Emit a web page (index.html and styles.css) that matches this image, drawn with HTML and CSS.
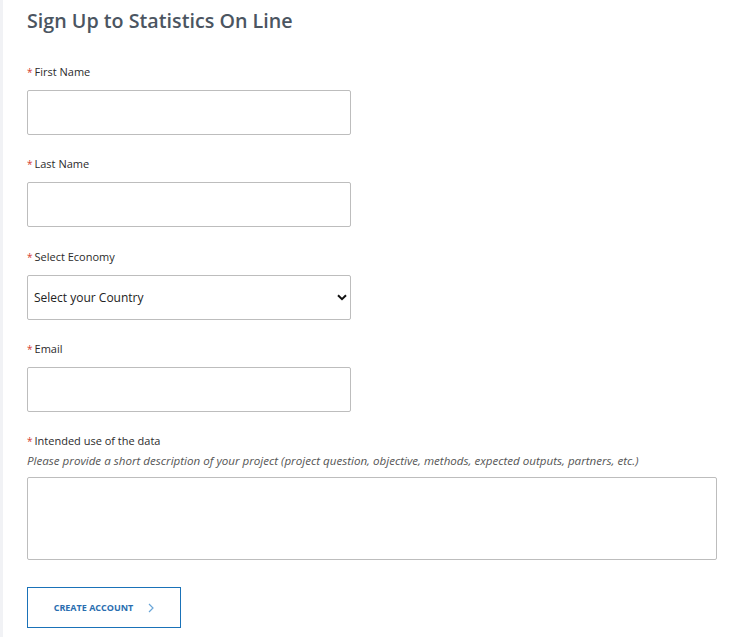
FILE: index.html
```html
<!DOCTYPE html>
<html lang="en">
<head>
<meta charset="utf-8">
<title>Sign Up to Statistics On Line</title>
<link rel="stylesheet" href="styles.css">
</head>
<body>
<div class="page">
  <main class="content">
    <h1 class="title">Sign Up to Statistics On Line</h1>
    <form class="form">
      <div class="field">
        <label class="label" for="fn"><span class="req">*</span>First Name</label>
        <input class="input" id="fn" type="text">
      </div>
      <div class="field">
        <label class="label" for="ln"><span class="req">*</span>Last Name</label>
        <input class="input" id="ln" type="text">
      </div>
      <div class="field">
        <label class="label" for="ec"><span class="req">*</span>Select Economy</label>
        <div class="select-wrap">
          <select class="input select" id="ec">
            <option>Select your Country</option>
          </select>
          <svg class="caret" width="10" height="7" viewBox="0 0 10 7"><path d="M1 1.2 L5 5.2 L9 1.2" fill="none" stroke="#111" stroke-width="2"/></svg>
        </div>
      </div>
      <div class="field">
        <label class="label" for="em"><span class="req">*</span>Email</label>
        <input class="input" id="em" type="email">
      </div>
      <div class="field field-last">
        <label class="label" for="iu"><span class="req">*</span>Intended use of the data</label>
        <p class="hint">Please provide a short description of your project (project question, objective, methods, expected outputs, partners, etc.)</p>
        <textarea class="textarea" id="iu"></textarea>
      </div>
      <button class="btn" type="button">CREATE ACCOUNT <svg class="chev" width="6" height="10" viewBox="0 0 6 10"><path d="M1 1 L5 5 L1 9" fill="none" stroke="#6aa6d8" stroke-width="1.2"/></svg></button>
    </form>
  </main>
</div>
</body>
</html>
```
FILE: styles.css
```css
html, body {
  margin: 0;
  padding: 0;
  background: #ffffff;
}
body {
  font-family: "Open Sans", "Liberation Sans", Arial, sans-serif;
  color: #333;
}
.page {
  border-left: 3px solid #f1f2f5;
  min-height: 637px;
  box-sizing: border-box;
}
.content {
  padding: 0 0 0 24px;
}
.title {
  margin: 0;
  padding-top: 6px;
  font-size: 19.7px;
  line-height: 30px;
  font-weight: 600;
  color: #4b5561;
}
.form {
  margin-top: 28px;
  display: flex;
  flex-direction: column;
}
.field {
  display: flex;
  flex-direction: column;
  margin-bottom: 21.33px;
}
.field-last {
  margin-bottom: 27px;
}
.label {
  font-size: 11px;
  line-height: 16px;
  color: #2b2b2b;
  margin-bottom: 10px;
}
.req {
  color: #d33a2f;
  font-size: 10px;
  margin-right: 2px;
}
.input {
  width: 324px;
  height: 45px;
  box-sizing: border-box;
  border: 1px solid #bdbdbd;
  border-radius: 2px;
  background: #fff;
  font-family: inherit;
  font-size: 12px;
  padding: 0 6px;
  outline: none;
}
.select-wrap {
  position: relative;
  width: 324px;
}
.select {
  appearance: none;
  -webkit-appearance: none;
  color: #222;
}
.caret {
  position: absolute;
  right: 4px;
  top: 19px;
  pointer-events: none;
}
.hint {
  margin: -6px 0 0 0;
  font-size: 11.6px;
  line-height: 16px;
  font-style: italic;
  color: #555;
}
.textarea {
  margin-top: 8px;
  width: 690px;
  height: 83px;
  box-sizing: border-box;
  border: 1px solid #bdbdbd;
  border-radius: 2px;
  resize: none;
  font-family: inherit;
  outline: none;
}
.btn {
  align-self: flex-start;
  width: 154px;
  height: 41px;
  box-sizing: border-box;
  border: 1px solid #1a72b8;
  background: #fff;
  color: #2a6eb0;
  font-family: inherit;
  font-weight: 700;
  font-size: 9px;
  display: flex;
  align-items: center;
  justify-content: center;
  gap: 15px;
  padding: 0;
  cursor: pointer;
}
.chev {
  display: block;
}
```
